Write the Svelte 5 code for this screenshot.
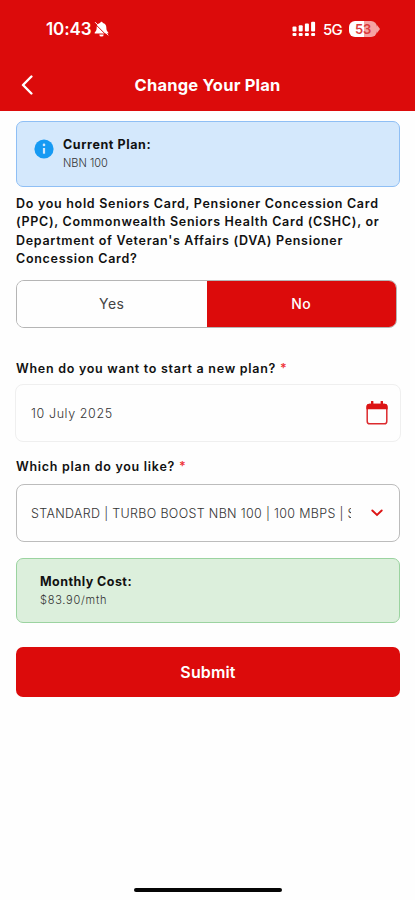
<script>
    let holdsCard = $state("No");

    const options = ["Yes", "No"];
    const question = [
        "Do you hold Seniors Card, Pensioner Concession Card",
        "(PPC), Commonwealth Seniors Health Card (CSHC), or",
        "Department of Veteran's Affairs (DVA) Pensioner",
        "Concession Card?",
    ];
</script>

<div class="screen">
    <header>
        <div class="status">
            <div class="clock">
                <span>10:43</span>
                <svg width="15" height="16" viewBox="0 0 15 16">
                    <path
                        d="M7.5 .8a1.300 1.300 0 0 1 1.300 1.100c2.200.5 3.500 2.100 3.500 4.400 0 3 .7 4 2 5.200v1.100H.7v-1.100c1.300-1.200 2-2.200 2-5.200 0-2.300 1.300-3.900 3.500-4.400A1.300 1.300 0 0 1 7.500.8zM5.300 13.400h4.400a2.200 2.200 0 0 1-4.400 0z"
                        fill="#fff"
                    />
                    <path d="M0.300 2.100 13.100 14.900" stroke="#dc0b0b" stroke-width="1" />
                    <path d="M1.100 1.200 14.200 14.300" stroke="#fff" stroke-width="1" />
                </svg>
            </div>
            <div class="indicators">
                <svg width="24" height="16" viewBox="0 0 24 16" fill="#fff">
                    <rect x="0.5" y="5.5" width="4" height="5" rx="1" />
                    <rect x="6.7" y="4.2" width="4" height="6.3" rx="1" />
                    <rect x="12.9" y="2.4" width="4" height="8.1" rx="1" />
                    <rect x="19.1" y="0.8" width="4" height="9.7" rx="1" />
                    <rect x="0.5" y="12" width="4" height="3" rx="1" />
                    <rect x="6.7" y="12" width="4" height="3" rx="1" />
                    <rect x="12.9" y="12" width="4" height="3" rx="1" />
                    <rect x="19.1" y="12" width="4" height="3" rx="1" />
                </svg>
                <span class="network">5G</span>
                <div class="battery">
                    <div class="level">53</div>
                    <svg width="3" height="8" viewBox="0 0 3 8">
                        <path d="M0 0 3 4 0 8z" fill="#f5a3a3" />
                    </svg>
                </div>
            </div>
        </div>
        <div class="titlebar">
            <svg class="back" width="12" height="20" viewBox="0 0 12 20">
                <path
                    d="M10.4 1.5 2 10l8.4 8.5"
                    fill="none"
                    stroke="#fff"
                    stroke-width="2.4"
                    stroke-linecap="round"
                    stroke-linejoin="round"
                />
            </svg>
            <h1>Change Your Plan</h1>
        </div>
    </header>

    <main>
        <section class="card current">
            <svg width="20" height="20" viewBox="0 0 20 20">
                <circle cx="10" cy="10" r="9.6" fill="#169af3" />
                <circle cx="10" cy="5.9" r="1.3" fill="#d4e8fc" />
                <path d="M10 9v5.7" stroke="#d4e8fc" stroke-width="2.2" />
            </svg>
            <div>
                <div class="card-title">Current Plan:</div>
                <div class="card-text">NBN 100</div>
            </div>
        </section>

        <div class="question">
            {#each question as line}
                <div>{line}</div>
            {/each}
        </div>

        <div class="toggle">
            {#each options as option}
                <button
                    class={holdsCard === option ? "option selected" : "option"}
                    onclick={() => (holdsCard = option)}>{option}</button
                >
            {/each}
        </div>

        <div class="label start">When do you want to start a new plan? <span>*</span></div>
        <div class="field date">
            <span class="value">10 July 2025</span>
            <svg width="22" height="24" viewBox="0 0 22 24">
                <rect
                    x="1.2"
                    y="3.6"
                    width="19.6"
                    height="19.2"
                    rx="2.6"
                    fill="none"
                    stroke="#dc2a2e"
                    stroke-width="1.5"
                />
                <path
                    d="M3.4 2.800H5V.8a1 1 0 0 1 2.400 0v2h7.200v-2a1 1 0 0 1 2.400 0v2h1.600a3 3 0 0 1 3 3V8.300H.4V5.800a3 3 0 0 1 3-3z"
                    fill="#dc1515"
                />
            </svg>
        </div>

        <div class="label which">Which plan do you like? <span>*</span></div>
        <div class="field plan">
            <span class="value">STANDARD | TURBO BOOST NBN 100 | 100 MBPS | S</span>
            <svg width="12" height="8" viewBox="0 0 12 8">
                <path
                    d="M1.300 1.500 6 6l4.700-4.500"
                    fill="none"
                    stroke="#dc1515"
                    stroke-width="1.9"
                    stroke-linecap="round"
                />
            </svg>
        </div>

        <section class="card cost">
            <div>
                <div class="card-title">Monthly Cost:</div>
                <div class="card-text">$83.90/mth</div>
            </div>
        </section>

        <button class="submit">Submit</button>
    </main>

    <div class="home"></div>
</div>

<style>
    :global(body) {
        background-color: #fefefe;
    }
    .screen {
        width: 100%;
        height: 900px;
        display: flex;
        flex-direction: column;
        font-family: Inter, "Open Sans", sans-serif;
        color: #111;
        overflow: hidden;
        box-sizing: border-box;
    }
    svg {
        display: block;
        flex: none;
    }
    button {
        border: 0;
        padding: 0;
        font-family: inherit;
    }
    header {
        height: 111px;
        flex: none;
        background-color: #dc0b0b;
        color: #fff;
    }
    .status {
        height: 58px;
        display: flex;
        justify-content: space-between;
        align-items: center;
        padding: 0 35px 0 46px;
    }
    .clock {
        display: flex;
        align-items: center;
        gap: 3px;
        font-size: 17px;
        font-weight: 600;
        letter-spacing: -0.1px;
    }
    .indicators {
        display: flex;
        align-items: center;
    }
    .indicators > svg {
        margin-top: -1px;
    }
    .network {
        font-size: 15px;
        font-weight: 500;
        letter-spacing: -0.7px;
        margin: 0 7px 0 7px;
    }
    .battery {
        display: flex;
        align-items: center;
    }
    .level {
        width: 28px;
        height: 16px;
        border-radius: 6px;
        background: linear-gradient(90deg, #fff 54%, #f5a3a3 54%);
        color: #dc3a3a;
        font-size: 13px;
        line-height: 16px;
        font-weight: 600;
        letter-spacing: -0.3px;
        text-align: center;
    }
    .titlebar {
        height: 53px;
        display: grid;
        grid-template-columns: 12px 1fr 12px;
        align-items: center;
        padding: 0 21px;
    }
    h1 {
        margin: 0;
        font-size: 16.500px;
        line-height: 24px;
        font-weight: 700;
        letter-spacing: 0.2px;
        text-align: center;
    }
    main {
        display: flex;
        flex-direction: column;
        padding: 10px 15px 0 16px;
    }
    .card {
        box-sizing: border-box;
        border-radius: 7px;
        display: flex;
    }
    .current {
        height: 66px;
        border: 1px solid #8fbff5;
        background-color: #d4e8fc;
        padding: 14px 17px;
        gap: 9px;
    }
    .current svg {
        margin-top: 3px;
    }
    .card-title {
        font-size: 12.500px;
        line-height: 17px;
        font-weight: 700;
        letter-spacing: 0.6px;
    }
    .card-text {
        font-size: 11px;
        line-height: 20px;
        font-weight: 300;
        color: #333;
    }
    .question {
        margin-top: 8px;
        font-size: 12.500px;
        line-height: 18.400px;
        font-weight: 600;
        letter-spacing: 0.7px;
        white-space: nowrap;
    }
    .toggle {
        height: 48px;
        width: 381px;
        margin-top: 11px;
        box-sizing: border-box;
        border: 1px solid #b5b5b5;
        border-radius: 8px;
        display: grid;
        grid-template-columns: 1fr 1fr;
        overflow: hidden;
    }
    .option {
        background-color: #fefefe;
        color: #444;
        font-size: 14px;
        letter-spacing: 0.5px;
    }
    .selected {
        background-color: #dc0b0b;
        color: #fff;
        font-weight: 500;
    }
    .label {
        font-size: 12.500px;
        line-height: 18px;
        font-weight: 600;
        letter-spacing: 0.72px;
    }
    .label span {
        color: #ee3338;
    }
    .start {
        margin-top: 32px;
    }
    .which {
        margin-top: 16px;
    }
    .field {
        height: 58px;
        box-sizing: border-box;
        border-radius: 8px;
        display: flex;
        align-items: center;
        justify-content: space-between;
    }
    .value {
        font-size: 12.500px;
        font-weight: 300;
        letter-spacing: 0.6px;
        padding-top: 1px;
        color: #333;
        white-space: nowrap;
        overflow: hidden;
    }
    .date {
        border: 1px solid #efefef;
        margin: 6px -1px 0;
        padding: 0 12px 0 15px;
    }
    .plan {
        border: 1px solid #bcbcbc;
        margin-top: 8px;
        padding: 0 16px 0 14px;
    }
    .plan .value {
        width: 320px;
        letter-spacing: 0.33px;
    }
    .cost {
        height: 65px;
        margin-top: 16px;
        border: 1px solid #9bd3a0;
        background-color: #dcefdc;
        padding: 14px 23px;
    }
    .cost .card-title {
        letter-spacing: 0.45px;
    }
    .cost .card-text {
        letter-spacing: 0.75px;
    }
    .submit {
        height: 50px;
        margin-top: 24px;
        border-radius: 7px;
        background-color: #dc0b0b;
        color: #fff;
        font-size: 16px;
        font-weight: 600;
        letter-spacing: 0.15px;
    }
    .home {
        width: 148px;
        height: 4px;
        margin: auto auto 8px 134px;
        border-radius: 2px;
        background-color: #050505;
    }
</style>
